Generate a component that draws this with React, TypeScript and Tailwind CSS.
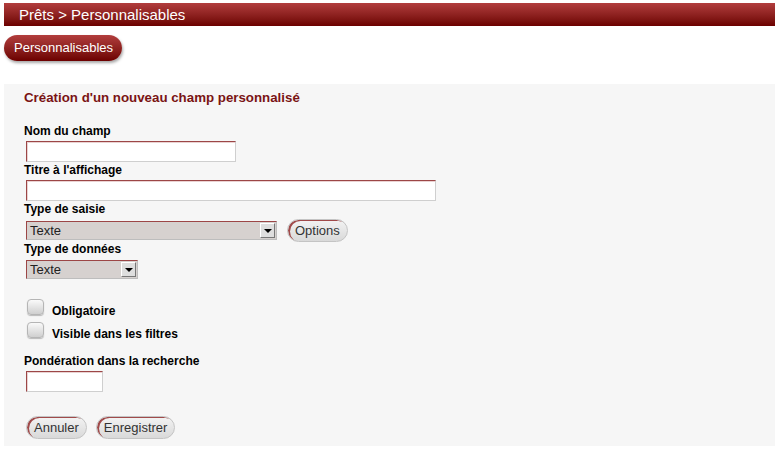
import React from "react";

const font = { fontFamily: '"Liberation Sans", Arial, sans-serif' };

function TextInput({ w }: { w: string }) {
  return (
    <div
      className={`${w} h-[21px] bg-white border border-t-[#9c4646] border-l-[#9c4646] border-r-[#cfcfcf] border-b-[#cfcfcf] shadow-[inset_1px_1px_0_#ead2d2]`}
    />
  );
}

function Select({ w }: { w: string }) {
  return (
    <div
      className={`${w} h-[19px] flex items-stretch bg-[#d6d1cf] border border-t-[#9c4646] border-l-[#9c4646] border-r-[#bdbdbd] border-b-[#bdbdbd]`}
    >
      <div className="flex-1 pl-[3px] text-[13px] leading-[17px] text-[#222]">Texte</div>
      <div className="w-[15px] m-[1px] bg-[#dedede] border border-t-white border-l-white border-r-[#777] border-b-[#777] flex items-center justify-center">
        <div className="w-0 h-0 border-l-[4px] border-r-[4px] border-t-[4px] border-l-transparent border-r-transparent border-t-black" />
      </div>
    </div>
  );
}

function GrayButton({ label }: { label: string }) {
  return (
    <div className="h-[23px] px-[7px] rounded-full border border-[#c4c4c4] bg-gradient-to-b from-[#f3f3f3] to-[#d9d9d9] shadow-[inset_2px_1px_0_#a04a4a] flex items-center text-[13px] text-[#333]">
      {label}
    </div>
  );
}

function Checkbox() {
  return (
    <div className="w-[17px] h-[16px] rounded-[4px] border border-[#b5b5b5] bg-gradient-to-b from-[#fafafa] to-[#cfcfcf] shadow-[0_1px_1px_rgba(0,0,0,0.25)]" />
  );
}

export default function App() {
  return (
    <div style={font} className="w-[775px] h-[462px] bg-white flex flex-col">
      <div className="mt-[3px] ml-[4px] h-[23px] bg-gradient-to-b from-[#b23d3d] to-[#6c0000] pl-[15px] text-white text-[15px] leading-[23px]">
        Prêts &gt; Personnalisables
      </div>
      <div className="mt-[9px] ml-[4px] w-[118px] h-[26px] rounded-full bg-gradient-to-b from-[#b23d3d] to-[#6c0000] shadow-[1px_2px_3px_rgba(0,0,0,0.35)] flex items-center pl-[10px] text-white text-[13px]">
        Personnalisables
      </div>
      <div className="mt-[23px] ml-[4px] h-[362px] bg-[#f6f6f6] pl-[20px] pt-[6px] flex flex-col items-start">
        <div className="h-[16px] text-[13.3px] leading-[16px] font-bold text-[#7a1414]">
          Création d'un nouveau champ personnalisé
        </div>
        <div className="mt-[18px] h-[14px] text-[12px] leading-[14px] font-bold text-black">Nom du champ</div>
        <div className="mt-[3px] ml-[2px]"><TextInput w="w-[210px]" /></div>
        <div className="mt-[1px] h-[14px] text-[12px] leading-[14px] font-bold text-black">Titre à l'affichage</div>
        <div className="mt-[3px] ml-[2px]"><TextInput w="w-[410px]" /></div>
        <div className="mt-[1px] h-[14px] text-[12px] leading-[14px] font-bold text-black">Type de saisie</div>
        <div className="mt-[3px] ml-[2px] flex items-center gap-[10px]">
          <Select w="w-[251px]" />
          <GrayButton label="Options" />
        </div>
        <div className="h-[14px] text-[12px] leading-[14px] font-bold text-black">Type de données</div>
        <div className="mt-[4px] ml-[2px]"><Select w="w-[112px]" /></div>
        <div className="mt-[20px] ml-[3px] flex items-start gap-[8px]">
          <Checkbox />
          <div className="mt-[5px] text-[12px] leading-[14px] font-bold text-black">Obligatoire</div>
        </div>
        <div className="mt-[4px] ml-[3px] flex items-start gap-[8px]">
          <Checkbox />
          <div className="mt-[5px] text-[12px] leading-[14px] font-bold text-black">Visible dans les filtres</div>
        </div>
        <div className="mt-[13px] h-[14px] text-[12px] leading-[14px] font-bold text-black">Pondération dans la recherche</div>
        <div className="mt-[3px] ml-[2px]"><TextInput w="w-[77px]" /></div>
        <div className="mt-[24px] ml-[2px] flex gap-[9px]">
          <GrayButton label="Annuler" />
          <GrayButton label="Enregistrer" />
        </div>
      </div>
    </div>
  );
}
